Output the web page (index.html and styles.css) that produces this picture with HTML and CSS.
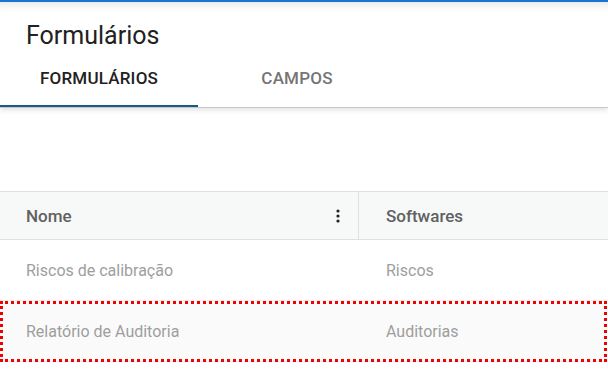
FILE: index.html
```html
<!DOCTYPE html>
<html>
<head>
<meta charset="UTF-8">
<title>Formulários</title>
<link rel="stylesheet" href="styles.css">
</head>
<body>
<div class="topbar"></div>
<div class="page-header">
  <h1 class="page-title">Formulários</h1>
  <div class="tabs">
    <div class="tab active">FORMULÁRIOS</div>
    <div class="tab">CAMPOS</div>
  </div>
</div>

<div class="grid">
  <div class="grid-head">
    <div class="cell col-name">
      <span>Nome</span>
      <svg class="menu-dots" width="4" height="14" viewBox="0 0 4 14">
        <circle cx="2" cy="2" r="1.6"/>
        <circle cx="2" cy="7" r="1.6"/>
        <circle cx="2" cy="12" r="1.6"/>
      </svg>
    </div>
    <div class="cell col-soft">Softwares</div>
  </div>
  <div class="grid-row">
    <div class="cell col-name">Riscos de calibração</div>
    <div class="cell col-soft">Riscos</div>
  </div>
  <div class="grid-row selected">
    <div class="cell col-name">Relatório de Auditoria</div>
    <div class="cell col-soft">Auditorias</div>
  </div>
</div>
</body>
</html>
```

FILE: styles.css
```css
  body {
    font-family: Roboto, "Liberation Sans", Arial, sans-serif;
    background-color: #fff;
    margin: 0;
    padding: 0;
  }

  .topbar {
    height: 2px;
    background-color: #1976d2;
  }

  .page-header {
    height: 105px;
    background-color: #fff;
    border-bottom: 1px solid #c8c8c8;
    box-shadow: inset 0 10px 10px -8px rgba(0, 0, 0, 0.12), 0 2px 5px rgba(0, 0, 0, 0.12);
    display: flex;
    flex-direction: column;
  }

  .page-title {
    margin: 0;
    padding: 19px 0 0 26px;
    height: 38px;
    font-size: 25px;
    font-weight: 400;
    color: #212121;
  }

  .tabs {
    display: flex;
    margin-top: auto;
  }

  .tab {
    width: 198px;
    height: 46px;
    border-bottom: 2px solid transparent;
    display: flex;
    align-items: center;
    justify-content: center;
    padding-bottom: 10px;
    box-sizing: border-box;
    font-size: 17px;
    font-weight: 500;
    letter-spacing: 0.2px;
    color: #757575;
  }

  .tab.active {
    color: #212121;
    border-bottom-color: #1d5a80;
  }

  .grid {
    margin-top: 83px;
    border-top: 1px solid #e0e0e0;
  }

  .grid-head {
    display: flex;
    height: 47px;
    background-color: #f7f9f9;
    border-bottom: 1px solid #e0e0e0;
    font-weight: 500;
    font-size: 17px;
    color: #616161;
  }

  .grid-row {
    display: flex;
    height: 60px;
    border-bottom: 1px solid #ececec;
    font-size: 16px;
    color: #9e9e9e;
  }

  .grid-row.selected {
    background-color: #fafafa;
    outline: 3px dotted #ee0000;
    outline-offset: -3px;
    margin-right: 1px;
  }

  .cell {
    display: flex;
    align-items: center;
    padding-left: 26px;
    box-sizing: border-box;
  }

  .col-name {
    width: 359px;
    padding-right: 18px;
    justify-content: space-between;
  }

  .grid-head .col-name {
    border-right: 1px solid #e0e0e0;
  }

  .col-soft {
    padding-left: 27px;
  }

  .menu-dots {
    fill: #212121;
  }
```
